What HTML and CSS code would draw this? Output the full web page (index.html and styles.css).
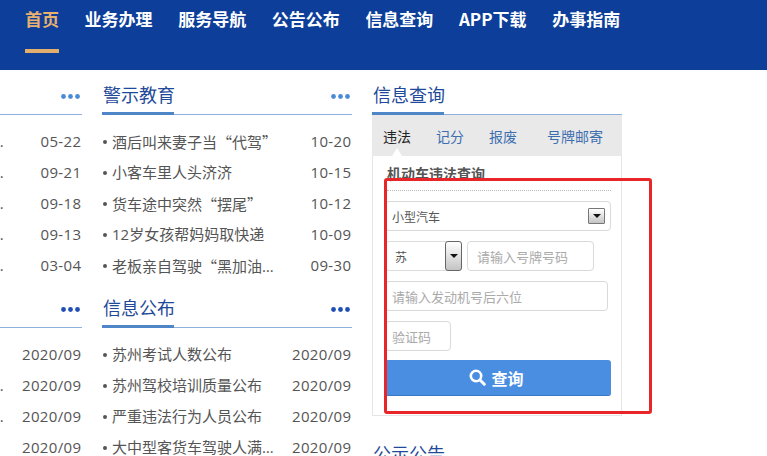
FILE: index.html
```html
<!DOCTYPE html>
<html lang="zh-CN">
  <head>
    <meta charset="utf-8">
    <title>信息查询</title>
    <link rel="stylesheet" href="styles.css">
  </head>
  <body>
    <div class="nav">
      <a class="nav-item active">首页</a>
      <a class="nav-item">业务办理</a>
      <a class="nav-item">服务导航</a>
      <a class="nav-item">公告公布</a>
      <a class="nav-item">信息查询</a>
      <a class="nav-item">APP下载</a>
      <a class="nav-item">办事指南</a>
    </div>

    <div class="main">
      <!-- first column runs off the left side of the window -->
      <div class="col">
        <div class="head">
          <span class="head-title">交通资讯</span>
          <svg class="more light" width="19" height="5" viewBox="0 0 19 5"><circle cx="2.5" cy="2.5" r="2.4"/><circle cx="9.5" cy="2.5" r="2.4"/><circle cx="16.5" cy="2.5" r="2.4"/></svg>
        </div>
        <ul class="list">
          <li><span class="title">全市道路交通安全情况通报</span><span class="date">05-22</span></li>
          <li><span class="title">全市道路交通安全情况通报</span><span class="date">09-21</span></li>
          <li><span class="title">全市道路交通安全情况通报</span><span class="date">09-18</span></li>
          <li><span class="title">全市道路交通安全情况通报</span><span class="date">09-13</span></li>
          <li><span class="title">全市道路交通安全情况通报</span><span class="date">03-04</span></li>
        </ul>
        <div class="head second">
          <span class="head-title">办事公告</span>
          <svg class="more" width="19" height="5" viewBox="0 0 19 5"><circle cx="2.5" cy="2.5" r="2.4"/><circle cx="9.5" cy="2.5" r="2.4"/><circle cx="16.5" cy="2.5" r="2.4"/></svg>
        </div>
        <ul class="list">
          <li><span class="title">考试预约公告</span><span class="date">2020/09</span></li>
          <li><span class="title">全市道路交通安全情况通报</span><span class="date">2020/09</span></li>
          <li><span class="title">全市道路交通安全情况通报</span><span class="date">2020/09</span></li>
          <li><span class="title">考试预约公告</span><span class="date">2020/09</span></li>
        </ul>
      </div>

      <div class="col">
        <div class="head">
          <span class="head-title">警示教育</span>
          <svg class="more light" width="19" height="5" viewBox="0 0 19 5"><circle cx="2.5" cy="2.5" r="2.4"/><circle cx="9.5" cy="2.5" r="2.4"/><circle cx="16.5" cy="2.5" r="2.4"/></svg>
        </div>
        <ul class="list">
          <li><span class="title">酒后叫来妻子当<span class="quote">“</span>代驾<span class="quote">”</span></span><span class="date">10-20</span></li>
          <li><span class="title">小客车里人头济济</span><span class="date">10-15</span></li>
          <li><span class="title">货车途中突然<span class="quote">“</span>摆尾<span class="quote">”</span></span><span class="date">10-12</span></li>
          <li><span class="title">12岁女孩帮妈妈取快递</span><span class="date">10-09</span></li>
          <li><span class="title">老板亲自驾驶<span class="quote">“</span>黑加油车<span class="quote">”</span></span><span class="date">09-30</span></li>
        </ul>
        <div class="head second">
          <span class="head-title">信息公布</span>
          <svg class="more" width="19" height="5" viewBox="0 0 19 5"><circle cx="2.5" cy="2.5" r="2.4"/><circle cx="9.5" cy="2.5" r="2.4"/><circle cx="16.5" cy="2.5" r="2.4"/></svg>
        </div>
        <ul class="list">
          <li><span class="title">苏州考试人数公布</span><span class="date">2020/09</span></li>
          <li><span class="title">苏州驾校培训质量公布</span><span class="date">2020/09</span></li>
          <li><span class="title">严重违法行为人员公布</span><span class="date">2020/09</span></li>
          <li><span class="title">大中型客货车驾驶人满分表</span><span class="date">2020/09</span></li>
        </ul>
      </div>

      <div class="col">
        <div class="head">
          <span class="head-title">信息查询</span>
        </div>
        <div class="tabs">
          <span class="tab active">违法</span>
          <span class="tab">记分</span>
          <span class="tab">报废</span>
          <span class="tab last">号牌邮寄</span>
        </div>
        <div class="panel">
          <div class="panel-title">机动车违法查询</div>
          <div class="form">
            <div class="field select wide">
              <span>小型汽车</span>
              <span class="arrow small"></span>
            </div>
            <div class="row">
              <div class="field select short">
                <span class="province">苏</span>
                <span class="arrow tall"></span>
              </div>
              <input class="field plate" placeholder="请输入号牌号码">
            </div>
            <input class="field engine" placeholder="请输入发动机号后六位">
            <input class="field code" placeholder="验证码">
            <button class="submit">
              <svg width="17" height="17" viewBox="0 0 17 17" fill="none" stroke="#fff"><circle cx="7" cy="7" r="5.2" stroke-width="2.6"/><path d="M11 11l4.3 4.3" stroke-width="3" stroke-linecap="round"/></svg>
              查询
            </button>
          </div>
        </div>
        <div class="head next">
          <span class="head-title">公示公告</span>
        </div>
      </div>
    </div>

    <div class="mark"></div>
  </body>
</html>
```
FILE: styles.css
```css
html, body {
  margin: 0;
  height: 456px;
  overflow: hidden;
  background: #fff;
  font-family: "Open Sans", "Noto Sans CJK SC", sans-serif;
  color: #555;
}

.nav {
  display: flex;
  gap: 25.6px;
  height: 70px;
  padding-left: 25px;
  box-sizing: border-box;
  background: #0d3f9a;
}
.nav-item {
  height: 24px;
  padding: 7px 0 18px;
  border-bottom: 4px solid transparent;
  font-family: "Noto Sans CJK SC", sans-serif;
  font-size: 17px;
  font-weight: bold;
  line-height: 24px;
  color: #fff;
}
.nav-item.active {
  color: #e6b06f;
  border-bottom-color: #e2ae6e;
}

.main {
  display: flex;
  gap: 20px;
  margin-left: -168px;
}
.col {
  flex: none;
  width: 250px;
}

.head {
  display: flex;
  align-items: flex-end;
  justify-content: space-between;
  height: 44px;
  border-bottom: 1px solid #8fb0de;
}
.head.second {
  margin-top: 2px;
}
.head.next {
  margin-top: 13px;
}
.head-title {
  box-sizing: border-box;
  width: 72px;
  margin-bottom: -1px;
  padding: 0 0 6px 1px;
  border-bottom: 3px solid #4f86c8;
  font-family: "Noto Sans CJK SC", sans-serif;
  font-size: 18px;
  line-height: 24px;
  white-space: nowrap;
  color: #1f4a99;
}
.more {
  margin: 0 2px 15px 0;
  fill: #1f4fb5;
}
.more.light {
  fill: #4a8bd8;
}

.list {
  margin: 0;
  padding: 11px 0 0;
  list-style: none;
}
.list li {
  display: flex;
  justify-content: space-between;
  height: 31px;
  font-size: 15px;
  line-height: 31px;
}
.title {
  position: relative;
  max-width: 166px;
  padding-left: 10px;
  overflow: hidden;
  white-space: nowrap;
  text-overflow: ellipsis;
}
.title::before {
  content: "";
  position: absolute;
  left: 1px;
  top: 14px;
  width: 4px;
  height: 4px;
  border-radius: 50%;
  background: #555;
}
.quote {
  font-family: "Noto Sans CJK SC", sans-serif;
}
.date {
  margin-right: 0.6px;
  letter-spacing: 0.35px;
}

.tabs {
  display: flex;
  gap: 25px;
  height: 41px;
  padding-left: 11px;
  background: #e9e9e9;
  font-family: "Noto Sans CJK SC", sans-serif;
  font-size: 14px;
  line-height: 42px;
  color: #3d6fb0;
}
.tab {
  position: relative;
}
.tab.last {
  margin-left: 5px;
}
.tab.active {
  color: #222;
}
.tab.active::after {
  content: "";
  position: absolute;
  left: 9px;
  bottom: 0;
  border: 5px solid transparent;
  border-top: 0;
  border-bottom: 8px solid #fff;
}

.panel {
  height: 260px;
  box-sizing: border-box;
  border: 1px solid #e5e5e5;
  border-top: 0;
  width: 250px;
  padding: 8px 10px 0 14px;
  font-family: "Noto Sans CJK SC", sans-serif;
}
.panel-title {
  height: 26px;
  border-bottom: 1px dotted #bbb;
  font-size: 14px;
  font-weight: bold;
  line-height: 18px;
  color: #555;
}
.form {
  display: flex;
  flex-direction: column;
  align-items: flex-start;
  gap: 10px;
  margin: 10px 0 0 -2px;
}
.row {
  display: flex;
  gap: 5px;
}
.field {
  height: 30px;
  box-sizing: border-box;
  padding: 0 0 0 6px;
  border: 1px solid #d9d9d9;
  border-radius: 4px;
  background: #fff;
  font-family: "Noto Sans CJK SC", sans-serif;
  font-size: 13px;
  color: #555;
  outline: none;
}
.field::placeholder {
  color: #aaa;
  opacity: 1;
}
.select {
  display: flex;
  align-items: center;
  justify-content: space-between;
  font-size: 12px;
}
.wide {
  width: 226px;
  padding-right: 5px;
}
.short {
  width: 77px;
  padding-right: 0;
  border-color: #ddd;
}
.province {
  padding-left: 3px;
}
.plate {
  width: 127px;
  padding-left: 9px;
}
.engine {
  width: 223px;
}
.code {
  width: 66px;
}
.arrow {
  display: flex;
  align-items: center;
  justify-content: center;
  box-sizing: border-box;
  border: 1px solid #777;
  border-radius: 1px;
  background: linear-gradient(#fff, #c4c4c4);
}
.arrow::after {
  content: "";
  border: 4px solid transparent;
  border-bottom: 0;
  border-top: 4px solid #111;
}
.arrow.small {
  width: 17px;
  height: 16px;
}
.arrow.tall {
  width: 17px;
  height: 30px;
  margin: -1px;
  border-color: #666;
  border-radius: 3px;
}

.submit {
  display: flex;
  align-items: center;
  justify-content: center;
  gap: 5px;
  width: 226px;
  height: 36px;
  margin-top: -1px;
  padding: 0 3px 0 0;
  border: 0;
  border-bottom: 1px solid #3b78c4;
  border-radius: 3px;
  background: #4a8ee2;
  font-family: "Noto Sans CJK SC", sans-serif;
  font-size: 16px;
  font-weight: bold;
  color: #fff;
}

/* red box drawn over the page */
.mark {
  position: absolute;
  left: 384px;
  top: 178px;
  width: 262px;
  height: 230px;
  border: 3px solid #e8262a;
  border-radius: 3px;
}
```
